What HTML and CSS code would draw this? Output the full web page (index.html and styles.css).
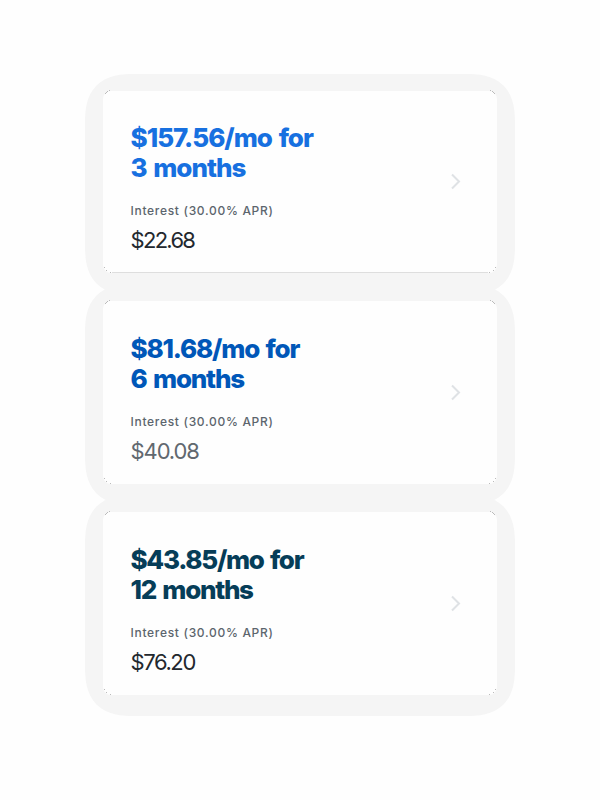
FILE: index.html
```
<!DOCTYPE html>
<html lang="en">
<head>
    <meta charset="utf-8">
    <title>Choose your plan</title>
    <link rel="stylesheet" href="styles.css">
</head>
<body>
    <main class="plans">
        <div class="plan plan-short">
            <div class="plan-card">
                <div class="plan-info">
                    <h2 class="plan-title">$157.56/mo for<br>3 months</h2>
                    <p class="plan-label">Interest (30.00% APR)</p>
                    <p class="plan-interest">$22.68</p>
                </div>
                <svg class="chevron" width="12" height="18" viewBox="0 0 12 18"><path d="M2 1.5l7 7-7 7"/></svg>
            </div>
        </div>
        <div class="plan plan-medium">
            <div class="plan-card">
                <div class="plan-info">
                    <h2 class="plan-title">$81.68/mo for<br>6 months</h2>
                    <p class="plan-label">Interest (30.00% APR)</p>
                    <p class="plan-interest">$40.08</p>
                </div>
                <svg class="chevron" width="12" height="18" viewBox="0 0 12 18"><path d="M2 1.5l7 7-7 7"/></svg>
            </div>
        </div>
        <div class="plan plan-long">
            <div class="plan-card">
                <div class="plan-info">
                    <h2 class="plan-title">$43.85/mo for<br>12 months</h2>
                    <p class="plan-label">Interest (30.00% APR)</p>
                    <p class="plan-interest">$76.20</p>
                </div>
                <svg class="chevron" width="12" height="18" viewBox="0 0 12 18"><path d="M2 1.5l7 7-7 7"/></svg>
            </div>
        </div>
    </main>
</body>
</html>
```

FILE: styles.css
```
body {
    margin: 0;
    background-color: #fefefe;
    font-family: Inter, "Liberation Sans", sans-serif;
}
.plans {
    width: 430px;
    margin: 0 auto;
    padding-top: 74px;
}
.plan {
    box-sizing: border-box;
    height: 221px;
    padding: 17px 18px 21px;
    border-radius: 38px;
    background-color: #f5f5f5;
}
@supports (corner-shape: superellipse(1.4)) {
    .plan {
        border-radius: 50px;
        corner-shape: superellipse(1.4);
    }
}
.plan-medium {
    margin-top: -11px;
}
.plan-long {
    margin-top: -10px;
}
.plan-card {
    position: relative;
    display: flex;
    align-items: center;
    justify-content: space-between;
    box-sizing: border-box;
    height: 183px;
    padding: 0 35px 0 28px;
    border-radius: 8px;
    background-color: #fefefe;
}
/* dotted edge on the card corners */
.plan-card::after {
    content: "";
    position: absolute;
    inset: -1px 0 0;
    --dot: linear-gradient(#bbb, #bbb);
    background:
        var(--dot) left 2px top 3px,
        var(--dot) left 3px top 2px,
        var(--dot) left 4px top 1px,
        var(--dot) left 6px top 0,
        var(--dot) right 2px top 3px,
        var(--dot) right 3px top 2px,
        var(--dot) right 4px top 1px,
        var(--dot) right 6px top 0,
        var(--dot) left 1px bottom 5px,
        var(--dot) left 3px bottom 2px,
        var(--dot) left 7px bottom 0,
        var(--dot) right 1px bottom 5px,
        var(--dot) right 3px bottom 2px,
        var(--dot) right 7px bottom 0;
    background-size: 1px 1px;
    background-repeat: no-repeat;
}
.plan-short .plan-card {
    height: 182px;
    background-image: linear-gradient(#dedede, #dedede);
    background-position: center bottom;
    background-size: calc(100% - 18px) 1px;
    background-repeat: no-repeat;
}
.plan-info {
    height: 118px;
    margin-left: -0.5px;
}
.plan-title {
    margin: 0 0 20px;
    font-size: 26px;
    font-weight: 800;
    line-height: 30px;
    letter-spacing: -1px;
    word-spacing: 2px;
}
.plan-label {
    margin: 0 0 8px;
    color: #5c656d;
    font-size: 12px;
    font-weight: 500;
    line-height: 16px;
    letter-spacing: 0.7px;
}
.plan-interest {
    margin: 0;
    color: #23282e;
    font-size: 22px;
    line-height: 26px;
    letter-spacing: -1.4px;
}
.plan-short .plan-title {
    color: #1770e0;
}
.plan-short .plan-interest {
    letter-spacing: -1.7px;
}
.plan-medium .plan-title {
    color: #0057b8;
    letter-spacing: -1.2px;
}
.plan-medium .plan-interest {
    color: #61686f;
    letter-spacing: -1.1px;
}
.plan-long .plan-title {
    color: #063d58;
    letter-spacing: -1.3px;
}
.chevron {
    fill: none;
    stroke: #dfe2e5;
    stroke-width: 2;
}
```
